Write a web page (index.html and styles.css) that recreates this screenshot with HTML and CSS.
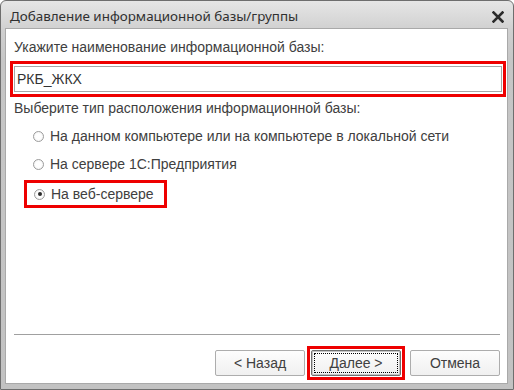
FILE: index.html
```html
<!DOCTYPE html>
<html lang="ru">
<head>
<meta charset="utf-8">
<title>Добавление информационной базы/группы</title>
<link rel="stylesheet" href="styles.css">
</head>
<body>
<div class="window">
  <div class="titlebar">
    <span class="title">Добавление информационной базы/группы</span>
    <svg class="close" width="12" height="12" viewBox="0 0 12 12"><path d="M1.5 1.5 L10.5 10.5 M10.5 1.5 L1.5 10.5" stroke="#2b2b2b" stroke-width="2.6" stroke-linecap="square"/></svg>
  </div>
  <div class="client">
    <div class="label first">Укажите наименование информационной базы:</div>
    <div class="mark mark-input"><input class="field" type="text" value="РКБ_ЖКХ"></div>
    <div class="label second">Выберите тип расположения информационной базы:</div>
    <div class="radios">
      <div class="radio"><span class="dot"></span><span>На данном компьютере или на компьютере в локальной сети</span></div>
      <div class="radio"><span class="dot"></span><span>На сервере 1С:Предприятия</span></div>
      <div class="mark mark-radio"><div class="radio"><span class="dot checked"></span><span>На веб-сервере</span></div></div>
    </div>
    <div class="spacer"></div>
    <div class="separator"></div>
    <div class="buttons">
      <div class="btn">&lt; Назад</div>
      <div class="mark mark-btn"><div class="btn default"><span class="focus">Далее &gt;</span></div></div>
      <div class="btn">Отмена</div>
    </div>
  </div>
</div>
</body>
</html>
```
FILE: styles.css
```css
html, body {
  margin: 0;
  padding: 0;
  overflow: hidden;
  background: #ffffff;
}
.window {
  box-sizing: border-box;
  width: 514px;
  height: 390px;
  border: 1px solid #6e6e6e;
  border-radius: 6px 6px 0 0;
  background: linear-gradient(#e6e6e6, #cfcfcf 30px, #c6c6c6 60px, #c2c2c2);
  padding: 0 6px 6px 5px;
  display: flex;
  flex-direction: column;
  font-family: "Liberation Sans", Arial, sans-serif;
}
.titlebar {
  height: 28px;
  display: flex;
  align-items: center;
  padding: 0 3px 0 4px;
}
.title {
  flex: 1;
  font-family: "Noto Sans", "Open Sans", sans-serif;
  font-size: 13.4px;
  color: #303030;
  padding-top: 2px;
}
.close {
  margin-top: 3px;
}
.client {
  flex: 1;
  background: #ffffff;
  box-shadow: 0 0 0 1px #a9a9a9;
  display: flex;
  flex-direction: column;
  font-size: 14px;
  color: #404040;
}
.label {
  line-height: 16px;
  margin-left: 8px;
}
.label.first {
  margin-top: 10px;
}
.label.second {
  margin-top: 3px;
}
.mark {
  box-sizing: border-box;
  border: 3px solid #ee0000;
}
.mark-input {
  margin: 6px 1px 0 4px;
  padding: 2px 1px;
}
.field {
  display: block;
  box-sizing: border-box;
  width: 100%;
  height: 26px;
  margin: 0;
  border: 1px solid #a6a6a6;
  padding: 0 2px;
  font: 14px "Liberation Sans", Arial, sans-serif;
  color: #333333;
  outline: none;
}
.radios {
  margin-top: 6px;
  display: flex;
  flex-direction: column;
}
.radio {
  height: 28px;
  display: flex;
  align-items: center;
  gap: 6px;
  padding-left: 27px;
}
.dot {
  box-sizing: border-box;
  width: 11px;
  height: 11px;
  border: 1px solid #9c9c9c;
  border-radius: 50%;
  background: radial-gradient(circle at 50% 50%, #ffffff 40%, #ececec);
  display: flex;
  align-items: center;
  justify-content: center;
}
.dot.checked::before {
  content: "";
  width: 4px;
  height: 4px;
  border-radius: 50%;
  background: #2a2a2a;
}
.mark-radio {
  margin: 2px 0 0 18px;
  width: 143px;
}
.mark-radio .radio {
  height: 22px;
  padding-left: 7px;
}
.spacer {
  flex: 1;
}
.separator {
  height: 1px;
  background: #a0a0a0;
  margin: 0 7px 0 8px;
}
.buttons {
  display: flex;
  justify-content: flex-end;
  align-items: center;
  gap: 2px;
  margin: 11px 7px 3px 0;
}
.btn {
  box-sizing: border-box;
  width: 90px;
  height: 26px;
  border: 1px solid #adadad;
  border-radius: 2px;
  background: linear-gradient(#fdfdfd, #f0f0f0);
  display: flex;
  align-items: center;
  justify-content: center;
  color: #404040;
}
.mark-btn {
  padding: 1px;
  margin-right: 3px;
}
.btn.default {
  border: 1px solid #707070;
  box-shadow: inset 0 0 0 1px #c4c4c4;
  padding: 2px;
}
.focus {
  box-sizing: border-box;
  width: 100%;
  height: 100%;
  border: 1px dotted #000000;
  display: flex;
  align-items: center;
  justify-content: center;
}
```
